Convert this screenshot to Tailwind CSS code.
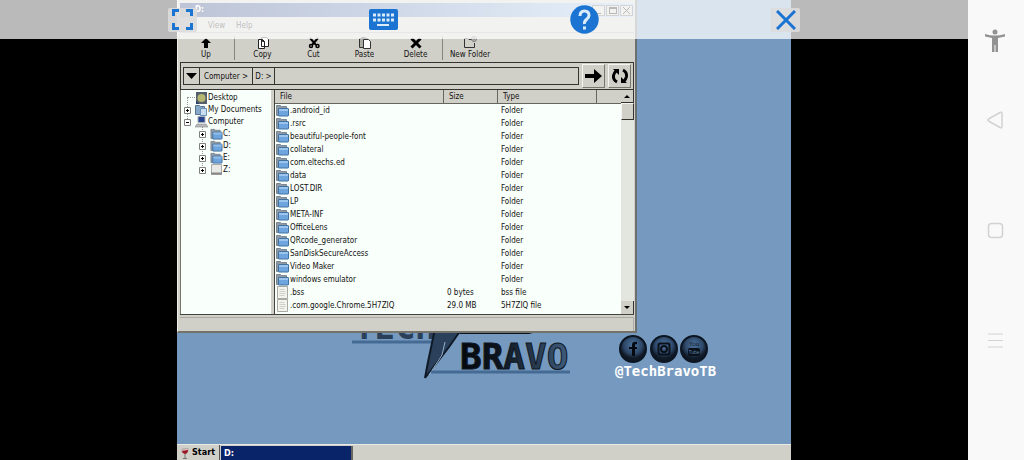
<!DOCTYPE html>
<html lang="en">
<head>
    <meta charset="UTF-8">
    <meta name="viewport" content="width=device-width, initial-scale=1.0">
    <title>D:</title>
    <script src="https://cdn.jsdelivr.net/npm/@tailwindcss/browser@4"></script>
</head>
<body class="flex h-screen overflow-hidden bg-black font-['DejaVu_Sans_Condensed','DejaVu_Sans',sans-serif] text-[8px] text-[#111]">

    <!-- Shared icons -->
    <svg class="hidden">
        <symbol id="folder" viewBox="0 0 13 13">
            <path d="M.5 1.500h4l1 1h5v9h-10z" fill="#8d99a5" stroke="#7b8792"/>
            <rect x="2.500" y="4.500" width="10" height="7.500" rx=".5" fill="#6fa5de" stroke="#43719f"/>
            <path d="M3 5.500h9M3 6.500h9" stroke="#9cc5ee"/>
        </symbol>
        <symbol id="document" viewBox="0 0 13 13">
            <path d="M1.500.5h10v12h-10z" fill="#f3f3ee" stroke="#a9a9a4"/>
            <path d="M3.500 3.500h5M3.500 5.500h6M3.500 7.500h6M3.500 9.500h5" stroke="#c6c6c2" stroke-width=".8"/>
        </symbol>
        <symbol id="plus" viewBox="0 0 7 7">
            <path d="M.5.5h6v6h-6z" fill="#fff" stroke="#808080"/>
            <path d="M2 3.500h3M3.500 2v3" stroke="#000"/>
        </symbol>
        <symbol id="minus" viewBox="0 0 7 7">
            <path d="M.5.5h6v6h-6z" fill="#fff" stroke="#808080"/>
            <path d="M2 3.500h3" stroke="#000"/>
        </symbol>
    </svg>

    <main class="relative flex min-w-0 flex-1 justify-center">
        <!-- Desktop -->
        <div class="relative flex w-[614px] flex-col justify-end overflow-hidden bg-[#769abf]">

            <!-- Wallpaper logo -->
            <svg class="absolute top-[320px] left-[170px]" width="400" height="66" viewBox="0 0 400 66">
                <defs>
                    <linearGradient id="ink" x1="0" x2="1">
                        <stop offset="0" stop-color="#05080d"/>
                        <stop offset=".35" stop-color="#0d141d"/>
                        <stop offset="1" stop-color="#3f5b7c"/>
                    </linearGradient>
                    <radialGradient id="disc" cy=".35">
                        <stop offset="0" stop-color="#4d739e"/>
                        <stop offset=".7" stop-color="#2c4666"/>
                        <stop offset="1" stop-color="#101a27"/>
                    </radialGradient>
                </defs>
                <text x="7" y="19" font-family="'DejaVu Sans Mono', monospace" font-weight="bold" font-size="34" fill="#2a4059">TECH</text>
                <path d="M5 22h91" stroke="#456b95" stroke-width="3"/>
                <path d="M89 4h29l-16 23-24 31 3-16z" fill="#2b415b" stroke="#101a27" stroke-width="2"/>
                <path d="M98 22l-3 13-13 20" fill="none" stroke="#91aecb"/>
                <path d="M112 14h70l22-6h-86z" fill="#0c131c"/>
                <text x="113" y="49" font-family="'DejaVu Sans Mono', monospace" font-weight="bold" font-size="36" fill="url(#ink)" stroke="#0d1622">BRAVO</text>
                <path d="M84 52h139" stroke="#456b95" stroke-width="3"/>
                <g fill="url(#disc)" stroke="#0c1521" stroke-width="2">
                    <circle cx="286" cy="29" r="13"/>
                    <circle cx="317" cy="29" r="13"/>
                    <circle cx="347" cy="29" r="13"/>
                </g>
                <path d="M285 36v-7h-3v-2h3v-2q0-4 5-3v2q-2 0-2 1v2h2v2h-2v7z" fill="#060a10"/>
                <rect x="311.500" y="23.500" width="11" height="11" rx="2" fill="none" stroke="#0a111a" stroke-width="2"/>
                <circle cx="317" cy="29" r="3" fill="none" stroke="#0a111a" stroke-width="2"/>
                <rect x="341" y="28" width="12" height="8" rx="2" fill="#0a111a"/>
                <text x="347" y="26" text-anchor="middle" font-family="'Liberation Sans', sans-serif" font-size="6" fill="#0a111a">You</text>
                <text x="347" y="34" text-anchor="middle" font-family="'Liberation Sans', sans-serif" font-size="5" fill="#5d82ab">Tube</text>
                <text x="268" y="56" font-family="'DejaVu Sans Mono', monospace" font-weight="bold" font-size="14" fill="#fff">@TechBravoTB</text>
            </svg>

            <!-- Explorer window -->
            <section class="absolute top-0 left-0 flex h-[333px] w-[460px] flex-col border-r-2 border-b-2 border-l border-r-[#6c6f70] border-b-[#73736c] border-l-[#eeeeea] bg-[#d0cfc8] pt-[3px] pr-px pl-[2px]">
                <header class="flex h-[14px] shrink-0 items-center bg-linear-to-r from-[#0a246a] to-[#a6caf0] pr-px pl-[15px] font-bold text-white">
                    <span class="flex-1">D:</span>
                    <div class="flex gap-px">
                        <button aria-label="Minimize" class="flex h-[11px] w-[13px] items-end justify-center border border-[#606060] bg-[#d0cfc8] pb-px"><span class="h-px w-[5px] bg-black"></span></button>
                        <button aria-label="Maximize" class="flex h-[11px] w-[13px] items-center justify-center border border-[#606060] bg-[#d0cfc8]"><span class="h-[7px] w-[8px] border border-t-2 border-black"></span></button>
                        <button aria-label="Close" class="flex h-[11px] w-[13px] items-center justify-center border border-[#606060] bg-[#d0cfc8]"><svg width="7" height="7" viewBox="0 0 7 7" stroke="#000"><path d="M0 0l7 7M7 0l-7 7"/></svg></button>
                    </div>
                </header>
                <nav class="flex h-4 shrink-0 items-center gap-[11px] border-b border-[#a5a5a0] pt-[3px] pl-7 text-black">
                    <button>View</button>
                    <button>Help</button>
                </nav>

                <!-- Toolbar -->
                <div class="flex h-[29px] shrink-0 items-center pt-px leading-[10px]">
                    <button class="flex w-[52px] flex-col items-center gap-px"><svg width="12" height="13" viewBox="0 0 12 13"><path d="M6 2l5 5H8v5H4V7H1z"/></svg>Up</button>
                    <span class="mx-[2px] h-6 w-px bg-[#85857f]"></span>
                    <button class="flex w-[51px] flex-col items-center gap-px"><svg width="12" height="13" viewBox="0 0 12 13" fill="#fff" stroke="#222"><path d="M4.500 1.500h5l2 2v7h-7zM1.500 3.500h4l2 2v7h-6z"/><path d="M5.500 3.500v2h2" fill="none"/></svg>Copy</button>
                    <button class="flex w-[51px] flex-col items-center gap-px"><svg width="12" height="13" viewBox="0 0 12 13" fill="none" stroke="#000" stroke-width="2"><path d="M2 2l6 7M10 2L4 9"/><circle cx="3" cy="10" r="1.500" stroke-width="1.500"/><circle cx="9.500" cy="10" r="1.500" stroke-width="1.500"/></svg>Cut</button>
                    <button class="flex w-[51px] flex-col items-center gap-px"><svg width="12" height="13" viewBox="0 0 12 13" fill="#aaa9a2" stroke="#333"><path d="M.5 2.500h8v9h-8z"/><path d="M2.500 1.500h4v1h-4z"/><path d="M4.500 3.500h5l2 2v7h-7z" fill="#fff"/></svg>Paste</button>
                    <button class="flex w-[51px] flex-col items-center gap-px"><svg width="12" height="13" viewBox="0 0 12 13" stroke="#000" stroke-width="3"><path d="M1.500 2.500l9 9M10.500 2.500l-9 9"/></svg>Delete</button>
                    <span class="mx-px h-6 w-px bg-[#85857f]"></span>
                    <button class="flex w-[52px] flex-col items-center gap-px whitespace-nowrap"><svg width="14" height="13" viewBox="0 0 14 13" fill="none" stroke="#333"><path d="M9 3.500H6l-1-1H1.500v9h10V7"/><circle cx="11" cy="3" r="2.500" stroke="#777"/><path d="M11 1v4M9 3h4" stroke="#777" stroke-width=".7"/></svg>New Folder</button>
                </div>

                <!-- Address bar -->
                <div class="flex h-7 shrink-0 items-center border border-[#33332f] px-[2px]">
                    <div class="flex h-[18px] min-w-0 flex-1 border border-[#33332f]">
                        <button aria-label="History" class="flex w-4 items-center justify-center border-r border-[#33332f]"><svg width="11" height="6" viewBox="0 0 11 6"><path d="M0 0h11L5.500 6z"/></svg></button>
                        <button class="w-[53px] border-r border-[#33332f] pt-px">Computer &gt;</button>
                        <button class="w-[22px] border-r border-[#33332f] pt-px">D: &gt;</button>
                        <input aria-label="Path" class="min-w-0 flex-1 outline-none">
                    </div>
                    <button aria-label="Go" class="ml-[3px] flex h-6 w-[23px] items-center justify-center border border-t-[#f4f4f0] border-r-[#77776f] border-b-[#77776f] border-l-[#f4f4f0]"><svg width="17" height="14" viewBox="0 0 17 14"><path d="M0 5h9V0l8 7-8 7V9H0z"/></svg></button>
                    <button aria-label="Refresh" class="ml-[3px] flex h-6 w-[23px] items-center justify-center border border-t-[#f4f4f0] border-r-[#77776f] border-b-[#77776f] border-l-[#f4f4f0]"><svg width="18" height="16" viewBox="0 0 18 16" fill="none" stroke="#000" stroke-width="3"><path d="M6 14Q2 12 2.500 7.500Q3 5 5 3M12 2q4 2 3.500 6.500Q15 11 13 13"/><path d="M2 1h6v6zM16 15h-6V9z" fill="#000" stroke="none"/></svg></button>
                </div>

                <div class="flex h-[225px] shrink-0 border-b border-[#44443f]">
                    <!-- Folder tree -->
                    <ul class="relative w-[91px] border-l border-[#77776f] bg-[#f9fffa] pt-[2px] leading-3">
                        <li class="absolute top-[7px] left-[6px] h-6 w-2 border-t border-l border-dotted border-[#999]" aria-hidden="true"></li>
                        <li class="absolute top-9 left-[21px] h-[42px] border-l border-dotted border-[#999]" aria-hidden="true"></li>
                        <li class="relative flex h-3 items-center pl-[14px]"><svg width="13" height="12" viewBox="0 0 13 12"><path d="M1 0h11v12H1z" fill="#54616a"/><circle cx="6.500" cy="6" r="4" fill="#b5b772"/><path d="M1 9l3 3H1z" fill="#223a66"/></svg>Desktop</li>
                        <li class="relative flex h-3 items-center pl-[3px]"><svg class="mr-1" width="7" height="7"><use href="#plus"/></svg><svg width="13" height="12" viewBox="0 0 13 12"><path d="M.5 1.500h4l1 1h4v8h-9z" fill="#88a8c8" stroke="#5b7590"/><path d="M5.500 4.500h6v7h-6z" fill="#c9def0" stroke="#6b93b8"/></svg>My Documents</li>
                        <li class="relative flex h-3 items-center pl-[3px]"><svg class="mr-1" width="7" height="7"><use href="#minus"/></svg><svg width="13" height="12" viewBox="0 0 13 12"><path d="M3 .5h7v6H3z" fill="#28458e" stroke="#a9b1bd"/><path d="M2 8h9l2 3H0z" fill="#b9bcc0" stroke="#777" stroke-width=".5"/></svg>Computer</li>
                        <li class="relative flex h-3 items-center pl-[18px]"><svg class="mr-1" width="7" height="7"><use href="#plus"/></svg><svg width="13" height="12"><use href="#folder"/></svg>C:</li>
                        <li class="relative flex h-3 items-center pl-[18px]"><svg class="mr-1" width="7" height="7"><use href="#plus"/></svg><svg width="13" height="12"><use href="#folder"/></svg>D:</li>
                        <li class="relative flex h-3 items-center pl-[18px]"><svg class="mr-1" width="7" height="7"><use href="#plus"/></svg><svg width="13" height="12"><use href="#folder"/></svg>E:</li>
                        <li class="relative flex h-3 items-center pl-[18px]"><svg class="mr-1" width="7" height="7"><use href="#plus"/></svg><svg width="13" height="12" viewBox="0 0 13 12"><path d="M1.500.5h10v10h-10z" fill="#e8e8e4" stroke="#aaa"/><path d="M1 9.500h11" stroke="#888" stroke-width="2"/></svg>Z:</li>
                    </ul>

                    <!-- File list -->
                    <div class="ml-[3px] flex min-w-0 flex-1 overflow-hidden border-l border-[#44443f] bg-[#f9fffa]">
                        <table class="min-w-0 flex-1 table-fixed border-separate border-spacing-0 self-start">
                            <thead>
                                <tr class="bg-[#d0cfc8] text-left leading-[12px]">
                                    <th class="h-[14px] w-[169px] border-r border-b border-[#66665f] p-0 pt-px pl-[5px] font-normal">File</th>
                                    <th class="w-[54px] border-r border-b border-[#66665f] p-0 pt-px pl-[5px] font-normal">Size</th>
                                    <th class="w-[99px] border-r border-b border-[#66665f] p-0 pt-px pl-[5px] font-normal">Type</th>
                                    <th class="border-b border-[#66665f] p-0"></th>
                                </tr>
                            </thead>
                            <tbody id="files"></tbody>
                        </table>
                        <div class="flex w-[13px] flex-col bg-[#e3e6df]">
                            <button aria-label="Scroll up" class="flex h-[13px] items-center justify-center border-r border-b border-[#33332f] bg-[#d0cfc8]"><svg width="6" height="3" viewBox="0 0 6 3"><path d="M3 0l3 3H0z"/></svg></button>
                            <div class="h-[17px] border border-t-[#f4f4f0] border-r-[#33332f] border-b-[#33332f] border-l-[#f4f4f0] bg-[#d0cfc8]"></div>
                            <button aria-label="Scroll down" class="mt-auto flex h-[13px] items-center justify-center border-r border-[#33332f] bg-[#d0cfc8]"><svg width="6" height="3" viewBox="0 0 6 3"><path d="M0 0h6L3 3z"/></svg></button>
                        </div>
                    </div>
                </div>
                <footer class="mt-[2px] flex-1 border-t border-r border-[#aaa9a2]"></footer>
            </section>

            <!-- Taskbar -->
            <div class="relative flex h-4 items-stretch border-t border-[#e8e8e4] bg-[#d0cfc8] pl-px text-[9px] font-bold">
                <button class="flex w-[42px] items-center gap-[3px] border-r border-[#55554f] pt-px pl-[3px] text-black"><svg width="8" height="11" viewBox="0 0 8 11"><path d="M1 1l6-1q1 5-3 6Q0 5 1 1z" fill="#d9b9b9" stroke="#999" stroke-width=".5"/><path d="M1 3l6-1q0 3-3 4Q1 5 1 3z" fill="#9c1522"/><path d="M4 6v4M2 10.500h4" stroke="#777"/></svg>Start</button>
                <button class="mt-px ml-px w-[132px] border-r-2 border-[#66665f] bg-[#0a246a] pt-px pl-[3px] text-left text-white">D:</button>
            </div>
        </div>

        <!-- Emulator controls -->
        <div class="absolute inset-x-0 top-0 flex h-[39px] items-center justify-between bg-white/73 px-[168px]">
            <button aria-label="Fullscreen" class="flex h-6 w-[29px] items-center justify-center rounded-xs bg-[#dcdcdc]/90"><svg width="21" height="21" viewBox="0 0 21 21" fill="none" stroke="#1b74d1" stroke-width="3"><path d="M1.500 7V1.500H7M14 1.500h5.500V7M19.500 14v5.500H14M7 19.500H1.500V14"/></svg></button>
            <button aria-label="Keyboard"><svg width="29" height="21" viewBox="0 0 29 21"><rect x="0" y="0" width="29" height="21" rx="2" fill="#1b74d1"/><path d="M4 6h21M4 11h21" stroke="#dcebfa" stroke-width="3" stroke-dasharray="3 1.500"/><path d="M8 16h12" stroke="#dcebfa" stroke-width="2"/></svg></button>
            <button aria-label="Help"><svg width="29" height="29" viewBox="0 0 29 29" fill="none" stroke="#dcebfa" stroke-width="3"><circle cx="14.500" cy="14.500" r="14.200" fill="#1b74d1" stroke="none"/><path d="M10 11q0-5 4.500-5T19 10.500q0 2-2.500 4T14.500 19M14.500 21.500v3"/></svg></button>
            <button aria-label="Close controls" class="flex h-6 w-[29px] items-center justify-center rounded-xs bg-[#dcdcdc]/90"><svg width="20" height="20" viewBox="0 0 20 20" stroke="#1b74d1" stroke-width="3"><path d="M1 1l18 18M19 1L1 19"/></svg></button>
        </div>
    </main>

    <!-- Phone navigation bar -->
    <nav class="flex w-14 shrink-0 flex-col items-center bg-[#f9f9f9] pt-[29px] pr-[2px]">
        <button aria-label="Accessibility"><svg width="20" height="24" viewBox="0 0 20 24" fill="#929292"><circle cx="10" cy="3" r="2.500"/><path d="M0 5q10 3 20 0v2.500l-7 1.500v14h-2.500v-7h-1v7H7V9L0 7.500z"/></svg></button>
        <button aria-label="Back" class="mt-[58px]"><svg width="18" height="18" viewBox="0 0 18 18" fill="none" stroke="#d2d2d2" stroke-width="1.500"><path d="M2.500 8L14 1.500q2-1 2 1v13q0 2-2 1L2.500 10q-1.500-1 0-2z"/></svg></button>
        <button aria-label="Home" class="mt-[93px]"><svg width="17" height="17" viewBox="0 0 17 17" fill="none" stroke="#d2d2d2" stroke-width="1.500"><rect x="1.500" y="1.500" width="14" height="14" rx="3"/></svg></button>
        <button aria-label="Recent apps" class="mt-[93px]"><svg width="17" height="17" viewBox="0 0 17 17" stroke="#d2d2d2"><path d="M1 2h15M1 8.500h15M1 15h15"/></svg></button>
    </nav>

    <script>
        // name, size, type
        const files = [
            ['.android_id', '', 'Folder'],
            ['.rsrc', '', 'Folder'],
            ['beautiful-people-font', '', 'Folder'],
            ['collateral', '', 'Folder'],
            ['com.eltechs.ed', '', 'Folder'],
            ['data', '', 'Folder'],
            ['LOST.DIR', '', 'Folder'],
            ['LP', '', 'Folder'],
            ['META-INF', '', 'Folder'],
            ['OfficeLens', '', 'Folder'],
            ['QRcode_generator', '', 'Folder'],
            ['SanDiskSecureAccess', '', 'Folder'],
            ['Video Maker', '', 'Folder'],
            ['windows emulator', '', 'Folder'],
            ['.bss', '0 bytes', 'bss file'],
            ['.com.google.Chrome.5H7ZIQ', '29.0 MB', '5H7ZIQ file'],
        ];

        document.getElementById('files').innerHTML = files.map(([name, size, type]) => `
            <tr class="leading-[13px]">
                <td class="p-0 pl-px"><div class="flex h-[13px] items-center gap-px whitespace-nowrap"><svg width="13" height="13"><use href="#${type === 'Folder' ? 'folder' : 'document'}"/></svg>${name}</div></td>
                <td class="p-0 pl-[3px] whitespace-nowrap">${size}</td>
                <td class="p-0 pl-[3px] whitespace-nowrap">${type}</td>
                <td class="p-0"></td>
            </tr>`).join('');
    </script>
</body>
</html>
